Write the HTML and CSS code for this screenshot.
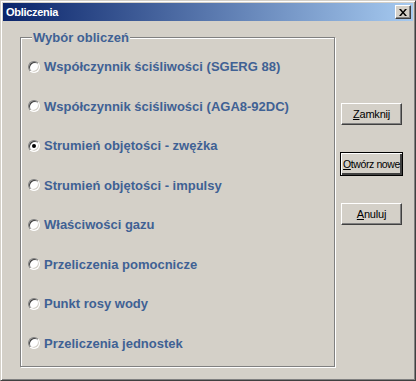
FILE: index.html
```html
<!DOCTYPE html>
<html lang="pl">
<head>
  <meta charset="UTF-8">
  <title>Obliczenia</title>
  <link rel="stylesheet" href="styles.css">
</head>
<body>
  <div class="window">
    <!-- pasek tytułu -->
    <div class="titlebar">
      <span class="title">Obliczenia</span>
      <span class="close-btn">
        <svg width="8" height="7" viewBox="0 0 8 7">
          <path d="M0 0h2l2 2.5l2-2.5h2l-3 3.5l3 3.5h-2l-2-2.5l-2 2.5h-2l3-3.5z" fill="#000"/>
        </svg>
      </span>
    </div>

    <div class="dialog">
      <!-- grupa wyboru -->
      <fieldset class="group">
        <legend>Wybór obliczeń</legend>
        <label class="option"><span class="radio"></span>Współczynnik ściśliwości (SGERG 88)</label>
        <label class="option"><span class="radio"></span>Współczynnik ściśliwości (AGA8-92DC)</label>
        <label class="option"><span class="radio checked"></span>Strumień objętości - zwężka</label>
        <label class="option"><span class="radio"></span>Strumień objętości - impulsy</label>
        <label class="option"><span class="radio"></span>Właściwości gazu</label>
        <label class="option"><span class="radio"></span>Przeliczenia pomocnicze</label>
        <label class="option"><span class="radio"></span>Punkt rosy wody</label>
        <label class="option"><span class="radio"></span>Przeliczenia jednostek</label>
      </fieldset>

      <!-- przyciski -->
      <div class="buttons">
        <button class="btn"><u>Z</u>amknij</button>
        <button class="btn btn-default"><u>O</u>twórz nowe</button>
        <button class="btn"><u>A</u>nuluj</button>
      </div>
    </div>
  </div>
</body>
</html>
```

FILE: styles.css
```css
* {
    box-sizing: border-box;
}

html, body {
    margin: 0;
    padding: 0;
    background: #d4d0c8;
}

/* okno */
.window {
    width: 416px;
    height: 381px;
    background: #d4d0c8;
    border: 1px solid;
    border-color: #d4d0c8 #404040 #404040 #d4d0c8;
    box-shadow: inset 1px 1px 0 #fff, inset -1px -1px 0 #808080;
    padding: 2px;
    display: flex;
    flex-direction: column;
}

.titlebar {
    height: 18px;
    background: linear-gradient(to right, #0a246a, #a6caf0);
    display: flex;
    align-items: center;
    justify-content: space-between;
    padding: 0 2px 0 3px;
}

.title {
    color: #fff;
    font: bold 11px "Liberation Sans", Tahoma, sans-serif;
    letter-spacing: -0.3px;
}

.close-btn {
    width: 16px;
    height: 14px;
    background: #d4d0c8;
    border: 1px solid;
    border-color: #fff #404040 #404040 #fff;
    box-shadow: inset -1px -1px 0 #808080;
    display: flex;
    align-items: center;
    justify-content: center;
}

/* zawartość */
.dialog {
    flex: 1;
    display: flex;
    padding: 9px 0 0 17px;
}

.group {
    margin: 0;
    width: 315px;
    height: 337px;
    padding: 2px 0 0 7px;
    border: 1px solid #808080;
    box-shadow: 1px 1px 0 #fff, inset 1px 1px 0 #fff;
}

.group legend {
    margin-left: 4px;
    padding: 0 1px;
    background: #d4d0c8;
    color: #3f6194;
    font: bold 13px "Liberation Sans", Arial, sans-serif;
}

.option {
    display: flex;
    align-items: center;
    height: 39.5px;
    color: #3f6194;
    font: bold 13px "Liberation Sans", Arial, sans-serif;
}

.radio {
    width: 12px;
    height: 12px;
    margin-right: 4px;
    border-radius: 50%;
    background: #fff;
    border: 1px solid;
    border-color: #808080 #fff #fff #808080;
    box-shadow: inset 1px 1px 0 #404040, inset -1px -1px 0 #d4d0c8;
    display: flex;
    align-items: center;
    justify-content: center;
}

.radio.checked::after {
    content: "";
    width: 4px;
    height: 4px;
    border-radius: 50%;
    background: #000;
}

.buttons {
    display: flex;
    flex-direction: column;
    gap: 27px;
    padding: 73px 0 0 6px;
}

.btn {
    width: 61px;
    height: 22px;
    padding: 0;
    background: #d4d0c8;
    border: 1px solid;
    border-color: #fff #404040 #404040 #fff;
    box-shadow: inset -1px -1px 0 #808080;
    font: 11px "Liberation Sans", Arial, sans-serif;
    letter-spacing: -0.2px;
    white-space: nowrap;
    color: #000;
}

.btn-default {
    width: 63px;
    height: 24px;
    margin-left: -1px;
    border: 1px solid #000;
    font-size: 10.5px;
    letter-spacing: -0.4px;
    box-shadow: inset 1px 1px 0 #fff, inset -2px -2px 0 #404040, inset -2px -2px 0 #808080;
}
```
